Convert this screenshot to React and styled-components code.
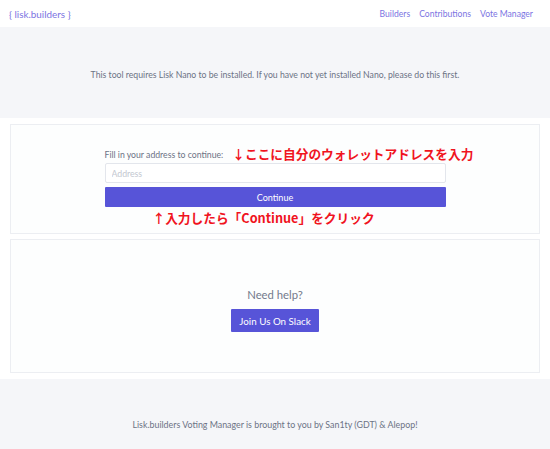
import React from "react";
import styled, { createGlobalStyle } from "styled-components";

const GlobalStyle = createGlobalStyle`
  html, body {
    margin: 0;
    padding: 0;
    background: #f5f6f9;
    font-family: Lato, "Noto Sans", sans-serif;
    color: #6f7687;
  }
  * { box-sizing: border-box; }
`;

const Header = styled.header`
  height: 27px;
  background: #ffffff;
  display: flex;
  align-items: center;
  justify-content: space-between;
  padding: 0 17px 0 9px;
`;

const Logo = styled.a`
  color: #7b74e2;
  font-size: 9.9px;
  text-decoration: none;
`;

const Nav = styled.nav`
  display: flex;
  gap: 9px;
`;

const NavLink = styled.a`
  color: #7b74e2;
  font-size: 8.6px;
  text-decoration: none;
`;

const Hero = styled.section`
  height: 91px;
  display: flex;
  align-items: center;
  justify-content: center;
  font-size: 8.7px;
  color: #6c7385;
  padding-top: 3px;
`;

const Cards = styled.main`
  background: #ffffff;
  display: flex;
  flex-direction: column;
  gap: 5px;
  padding: 6px 10px 6px 10px;
`;

const Card = styled.div`
  background: #fdfefe;
  border: 1px solid #eceef2;
  height: ${(p) => p.h}px;
  display: flex;
  flex-direction: column;
  align-items: center;
  padding-top: ${(p) => p.top}px;
`;

const Form = styled.div`
  width: 341px;
  display: flex;
  flex-direction: column;
`;

const LabelRow = styled.div`
  display: flex;
  align-items: center;
  height: 12px;
  margin-bottom: 3px;
`;

const Label = styled.label`
  font-size: 8.7px;
  color: #6c7385;
  white-space: nowrap;
`;

const Note = styled.span`
  font-family: "Noto Sans CJK JP", sans-serif;
  font-weight: 700;
  font-size: 12.7px;
  color: #f0141e;
  white-space: nowrap;
  margin-left: ${(p) => p.offset}px;
  line-height: 16px;
`;

const Input = styled.input`
  height: 20px;
  border: 1px solid #e3e6ec;
  border-radius: 2px;
  padding: 0 6px;
  font-family: inherit;
  font-size: 8.7px;
  outline: none;
  &::placeholder { color: #c3c7d0; }
`;

const Button = styled.button`
  height: ${(p) => p.h || 20}px;
  background: #5754d8;
  color: #ffffff;
  border: none;
  border-radius: 1px;
  font-family: inherit;
  font-size: ${(p) => p.size || 9}px;
  padding: 0 ${(p) => p.px || 0}px;
  margin-top: ${(p) => p.mt || 0}px;
`;

const NoteRow = styled.div`
  margin-top: 3px;
  display: flex;
`;

const Help = styled.div`
  font-size: 11.3px;
  color: #737a8c;
  margin-bottom: 8px;
`;

const Footer = styled.footer`
  height: 72px;
  display: flex;
  align-items: center;
  justify-content: center;
  font-size: 8.85px;
  color: #6c7385;
  padding-top: 18px;
`;

export default function App() {
  return (
    <>
      <GlobalStyle />
      <Header>
        <Logo href="#">{"{ lisk.builders }"}</Logo>
        <Nav>
          <NavLink href="#">Builders</NavLink>
          <NavLink href="#">Contributions</NavLink>
          <NavLink href="#">Vote Manager</NavLink>
        </Nav>
      </Header>
      <Hero>
        This tool requires Lisk Nano to be installed. If you have not yet installed Nano, please do this first.
      </Hero>
      <Cards>
        <Card h={110} top={23}>
          <Form>
            <LabelRow>
              <Label>Fill in your address to continue:</Label>
              <Note offset={9}>↓ここに自分のウォレットアドレスを入力</Note>
            </LabelRow>
            <Input placeholder="Address" />
            <Button mt={4}>Continue</Button>
            <NoteRow>
              <Note offset={48}>↑入力したら「Continue」をクリック</Note>
            </NoteRow>
          </Form>
        </Card>
        <Card h={134} top={48}>
          <Help>Need help?</Help>
          <Button h={23} size={9.8} px={8}>Join Us On Slack</Button>
        </Card>
      </Cards>
      <Footer>
        Lisk.builders Voting Manager is brought to you by San1ty (GDT) &amp; Alepop!
      </Footer>
    </>
  );
}
